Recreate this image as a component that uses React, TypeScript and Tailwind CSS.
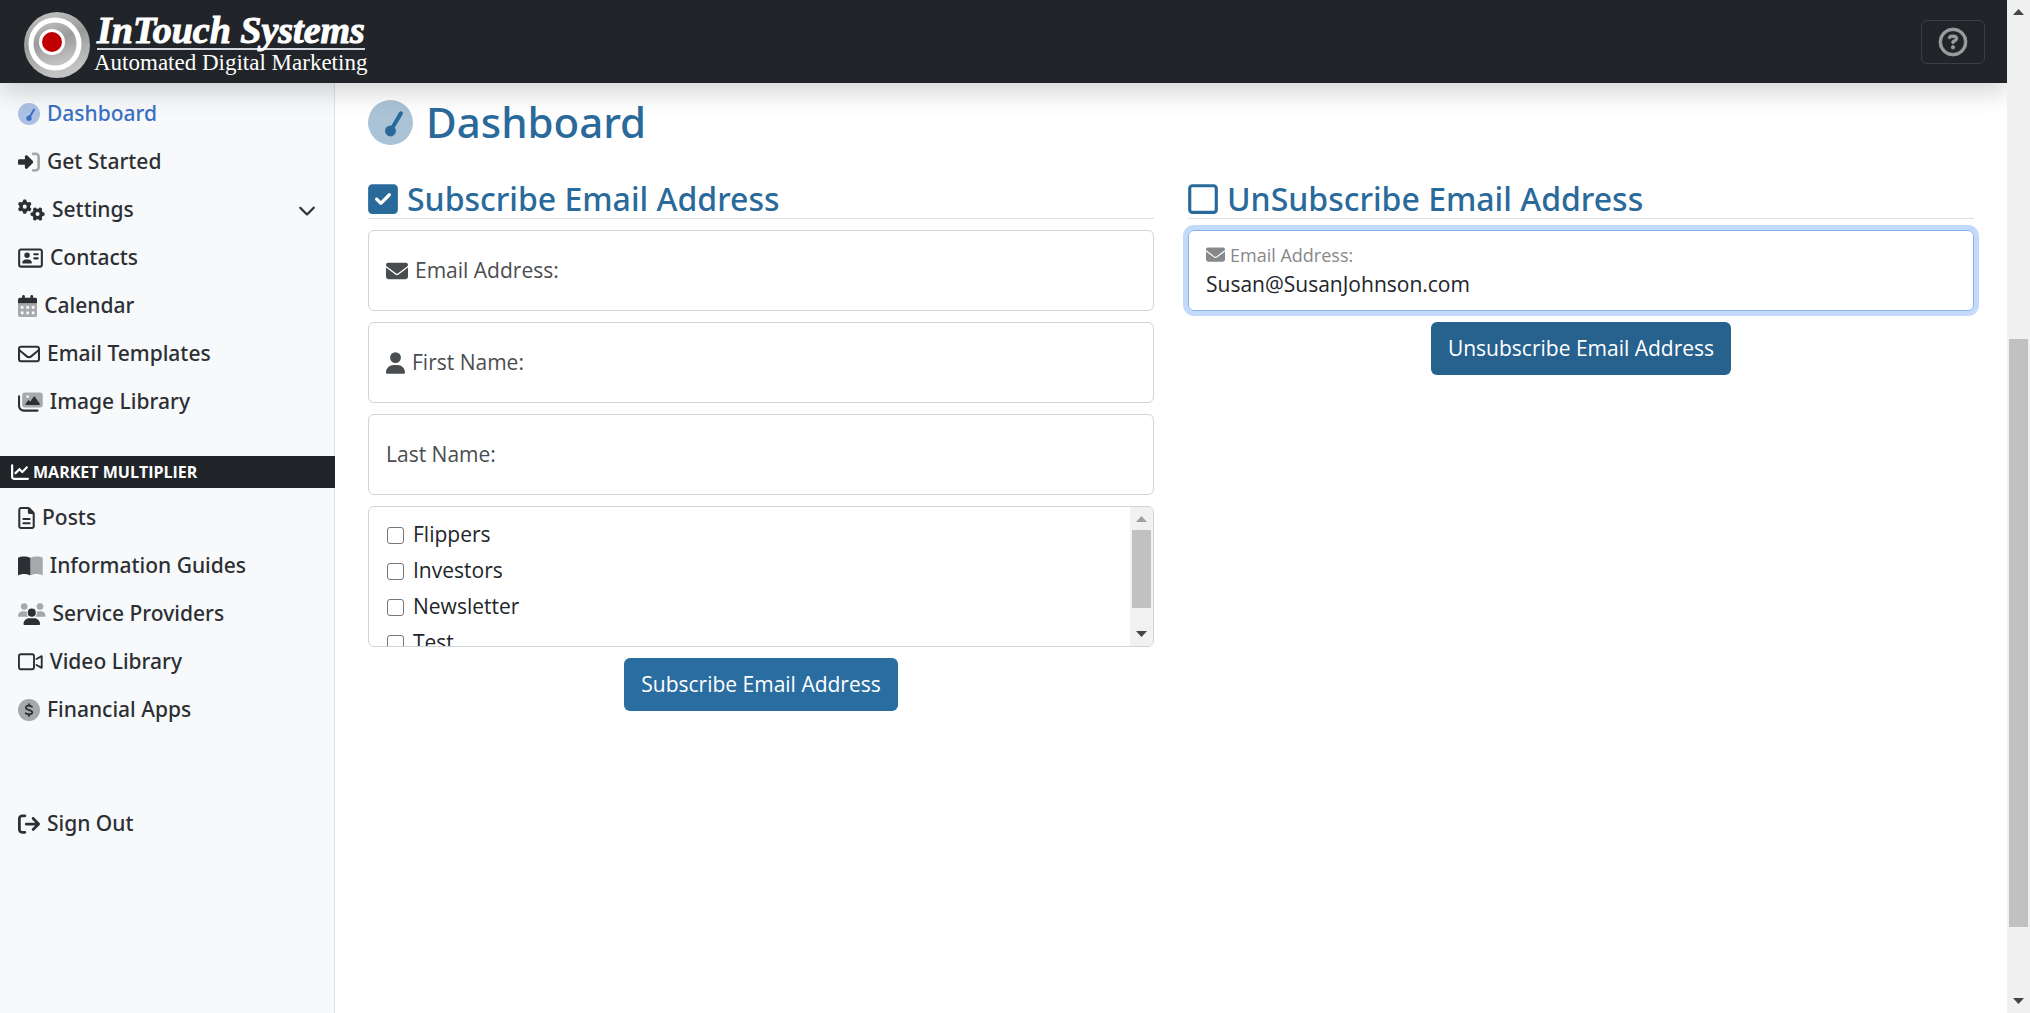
import { useState } from "react";
import type { ReactNode } from "react";
import {
  FaArrowRightFromBracket,
  FaChartLine,
  FaChevronDown,
  FaEnvelope,
  FaGears,
  FaRegAddressCard,
  FaRegCircleQuestion,
  FaRegEnvelope,
  FaRegFileLines,
  FaRegSquare,
  FaSquareCheck,
  FaUser,
} from "react-icons/fa6";

// Two-tone icons

function Duo({ w = 512, children }: { w?: number; children: ReactNode }) {
  return (
    <svg viewBox={`0 0 ${w} 512`} style={{ width: `${w / 512}em` }} className="h-[1em] shrink-0" fill="currentColor" aria-hidden="true">
      {children}
    </svg>
  );
}

function GaugeIcon() {
  return (
    <Duo>
      <circle cx="256" cy="256" r="256" opacity="0.4" />
      <circle cx="256" cy="352" r="62" />
      <path d="M256 352L374 152" stroke="currentColor" strokeWidth="46" strokeLinecap="round" />
    </Duo>
  );
}

function GetStartedIcon() {
  return (
    <Duo>
      <path d="M217.9 105.9L340.7 228.7c7.2 7.2 11.3 17.1 11.3 27.3s-4.1 20.1-11.3 27.3L217.9 406.1c-6.4 6.4-15 9.9-24 9.9c-18.7 0-33.9-15.2-33.9-33.9l0-62.1L32 320c-17.7 0-32-14.3-32-32l0-64c0-17.7 14.3-32 32-32l128 0 0-62.1c0-18.7 15.2-33.9 33.9-33.9c9 0 17.6 3.6 24 9.9z" />
      <path opacity="0.4" d="M352 416l64 0c17.7 0 32-14.3 32-32l0-256c0-17.7-14.3-32-32-32l-64 0c-17.7 0-32-14.3-32-32s14.3-32 32-32l64 0c53 0 96 43 96 96l0 256c0 53-43 96-96 96l-64 0c-17.7 0-32-14.3-32-32s14.3-32 32-32z" />
    </Duo>
  );
}

function CalendarIcon() {
  return (
    <Duo w={448}>
      <path
        opacity="0.4"
        fillRule="evenodd"
        d="M0 192H448V464a48 48 0 0 1-48 48H48a48 48 0 0 1-48-48ZM64 256v64h64v-64ZM192 256v64h64v-64ZM320 256v64h64v-64ZM64 384v64h64v-64ZM192 384v64h64v-64ZM320 384v64h64v-64Z"
      />
      <path d="M128 0a32 32 0 0 1 32 32v32h128V32a32 32 0 0 1 64 0v32h48a48 48 0 0 1 48 48v80H0v-80a48 48 0 0 1 48-48h48V32a32 32 0 0 1 32-32Z" />
    </Duo>
  );
}

function ImagesIcon() {
  return (
    <Duo w={576}>
      <path
        opacity="0.4"
        fillRule="evenodd"
        d="M160 32H512a64 64 0 0 1 64 64V320a64 64 0 0 1-64 64H160a64 64 0 0 1-64-64V96a64 64 0 0 1 64-64ZM224 160a32 32 0 1 0 0-64 32 32 0 0 0 0 64Z"
      />
      <path d="M362 138c8-12 26-12 34 0l112 160c8 12 0 26-14 26H188c-14 0-22-15-13-27l55-72c8-10 24-10 32 0l22 28Z" />
      <path d="M24 96a24 24 0 0 1 24 24V344c0 49 39 88 88 88H456a24 24 0 0 1 0 48H136C61 480 0 419 0 344V120a24 24 0 0 1 24-24Z" />
    </Duo>
  );
}

function BookIcon() {
  return (
    <Duo w={576}>
      <path d="M0 64C60 28 190 20 288 62V478C200 430 90 430 0 478Z" />
      <path opacity="0.4" d="M576 64C516 28 386 20 288 62V478C376 430 486 430 576 478Z" />
    </Duo>
  );
}

function PeopleIcon() {
  return (
    <Duo w={640}>
      <g opacity="0.4">
        <circle cx="144" cy="80" r="76" />
        <circle cx="512" cy="80" r="76" />
        <path d="M0 300c0-62 48-108 106-108h44c20 0 40 5 57 13-12 44 0 84 30 115H22c-12 0-22-9-22-20Z" />
        <path d="M640 300c0-62-48-108-106-108h-44c-20 0-40 5-57 13 12 44 0 84-30 115h215c12 0 22-9 22-20Z" />
      </g>
      <circle cx="320" cy="224" r="94" />
      <path d="M128 486c0-74 60-134 134-134h116c74 0 134 60 134 134 0 15-12 26-26 26H154c-14 0-26-11-26-26Z" />
    </Duo>
  );
}

function VideoIcon() {
  return (
    <Duo w={576}>
      <g fill="none" stroke="currentColor" strokeWidth="44" strokeLinejoin="round" strokeLinecap="round">
        <rect x="22" y="76" width="350" height="350" rx="46" />
        <path d="M430 186L552 120V392L430 326" />
      </g>
    </Duo>
  );
}

function DollarIcon() {
  return (
    <Duo>
      <circle cx="256" cy="256" r="256" opacity="0.4" />
      <g fill="none" stroke="currentColor" strokeWidth="40" strokeLinecap="round">
        <path d="M256 118V154M256 358V394" />
        <path d="M326 180c-22-14-48-24-74-24-40 0-68 18-68 48 0 72 148 36 148 106 0 32-32 48-70 48-34 0-62-14-84-28" />
      </g>
    </Duo>
  );
}

const mainLinks = [
  { label: "Dashboard", icon: <GaugeIcon />, active: true },
  { label: "Get Started", icon: <GetStartedIcon /> },
  { label: "Settings", icon: <FaGears className="w-[27px]" />, submenu: true },
  { label: "Contacts", icon: <FaRegAddressCard className="w-[25px]" /> },
  { label: "Calendar", icon: <CalendarIcon /> },
  { label: "Email Templates", icon: <FaRegEnvelope /> },
  { label: "Image Library", icon: <ImagesIcon /> },
];

const marketLinks = [
  { label: "Posts", icon: <FaRegFileLines className="w-[17px]" /> },
  { label: "Information Guides", icon: <BookIcon /> },
  { label: "Service Providers", icon: <PeopleIcon /> },
  { label: "Video Library", icon: <VideoIcon /> },
  { label: "Financial Apps", icon: <DollarIcon /> },
];

const lists = ["Flippers", "Investors", "Newsletter", "Test"];

type NavItem = { label: string; icon: ReactNode; active?: boolean; submenu?: boolean };

function NavLink({ label, icon, active, submenu }: NavItem) {
  return (
    <a
      href="#"
      className={`flex h-12 items-center gap-[7px] px-[18px] font-['Noto_Sans',sans-serif] font-medium ${active ? "text-[#3a6fc4]" : "text-[#2c2f33]"}`}
    >
      <span className="text-[22px]">{icon}</span>
      {label}
      {submenu && <FaChevronDown className="ml-auto text-lg" />}
    </a>
  );
}

function Logo() {
  return (
    <a href="#" className="flex items-center gap-1 pt-[7px] text-white">
      <svg viewBox="0 0 66 66" className="size-[66px]" aria-hidden="true">
        <defs>
          <linearGradient id="ring" x1="0" y1="0" x2="0.3" y2="1">
            <stop offset="0" stopColor="#c9c9c9" />
            <stop offset="0.5" stopColor="#9a9a9a" />
            <stop offset="1" stopColor="#c4c4c4" />
          </linearGradient>
        </defs>
        <circle cx="33" cy="33" r="33" fill="url(#ring)" />
        <circle cx="31" cy="32" r="24" fill="url(#ring)" stroke="#fff" strokeWidth="5" />
        <circle cx="28" cy="30" r="13" fill="#fff" />
        <circle cx="28" cy="30" r="10" fill="#c00000" />
      </svg>
      <span className="flex flex-col font-['Liberation_Serif',serif]">
        <span className="mx-[3px] border-b-2 border-gray-300 pb-[2px] text-[38px] leading-[32px] font-bold italic [-webkit-text-stroke:1px_white]">InTouch Systems</span>
        <span className="text-[23px] leading-[26px]">Automated Digital Marketing</span>
      </span>
    </a>
  );
}

function Arrow({ up = false, muted = false }: { up?: boolean; muted?: boolean }) {
  return (
    <svg viewBox="0 0 11 6" className={`h-[6px] w-[11px] ${muted ? "text-[#a0a0a0]" : "text-[#454545]"}`} fill="currentColor" aria-hidden="true">
      <path d={up ? "M0 6L5.5 0L11 6Z" : "M0 0L5.5 6L11 0Z"} />
    </svg>
  );
}

function Heading({ icon, children }: { icon: ReactNode; children: ReactNode }) {
  return (
    <h2 className="flex items-center gap-[9px] border-b border-[#dee2e6] font-['Noto_Sans',sans-serif] text-[32px] leading-[38px] font-medium text-[#2a6a9b]">
      {icon}
      {children}
    </h2>
  );
}

function Field({ id, label, icon }: { id: string; label: string; icon?: ReactNode }) {
  return (
    <div className="flex h-[81px] items-center gap-4 rounded-md border border-[#ced4da] px-[17px]">
      <label htmlFor={id} className="flex items-center gap-[7px] text-[#4a4d50]">
        {icon}
        {label}
      </label>
      <input id={id} type="text" className="min-w-0 flex-1 outline-none" />
    </div>
  );
}

export default function App() {
  const [email, setEmail] = useState("Susan@SusanJohnson.com");

  return (
    <div className="flex h-screen bg-white font-['Open_Sans',sans-serif] text-[21px] text-[#212529]">
      <div className="flex min-w-0 flex-1 flex-col overflow-hidden">
        <header className="z-10 flex h-[83px] shrink-0 items-center justify-between bg-[#212529] pr-[22px] pl-6 shadow-[0_11px_22px_rgba(0,0,0,0.15)]">
          <Logo />
          <button aria-label="Help" className="flex h-11 w-16 items-center justify-center rounded-md border border-[#3b3f44] text-[28px] text-[#9b9d9f]">
            <FaRegCircleQuestion stroke="currentColor" strokeWidth="14" className="overflow-visible" />
          </button>
        </header>

        <div className="flex min-h-0 flex-1">
          <nav className="w-[335px] shrink-0 border-r border-[#dee2e6] bg-[#f8f9fb] pt-[7px]">
            {mainLinks.map((link) => (
              <NavLink key={link.label} {...link} />
            ))}
            <h6 className="mt-[30px] -mr-px mb-[6px] flex h-8 items-center gap-1 bg-[#212529] px-[11px] text-base font-bold text-white">
              <FaChartLine className="text-lg" />
              MARKET MULTIPLIER
            </h6>
            {marketLinks.map((link) => (
              <NavLink key={link.label} {...link} />
            ))}
            <div className="pt-[66px]">
              <NavLink label="Sign Out" icon={<FaArrowRightFromBracket />} />
            </div>
          </nav>

          <main className="min-w-0 flex-1 px-[33px] pt-[11px]">
            <h1 className="flex items-center gap-[13px] font-['Noto_Sans',sans-serif] text-[42px] leading-[56px] font-medium text-[#2a6a9b]">
              <span className="text-[45px]">
                <GaugeIcon />
              </span>
              Dashboard
            </h1>

            <div className="mt-[30px] grid grid-cols-2 gap-[34px]">
              <section className="flex flex-col gap-[11px]">
                <Heading icon={<FaSquareCheck className="h-[34px] w-[30px]" />}>Subscribe Email Address</Heading>
                <Field id="sub-email" label="Email Address:" icon={<FaEnvelope className="text-[22px]" />} />
                <Field id="sub-first" label="First Name:" icon={<FaUser className="h-[22px] w-[19px]" />} />
                <Field id="sub-last" label="Last Name:" />

                <div className="flex h-[141px] overflow-hidden rounded-md border border-[#ced4da]">
                  <div className="flex-1 overflow-hidden px-[18px] pt-[10px]">
                    {lists.map((name) => (
                      <label key={name} className="flex h-9 items-center gap-[9px]">
                        <input type="checkbox" className="size-[17px] appearance-none rounded-[3px] border border-[#767676] bg-white checked:bg-[#2a6da0]" />
                        {name}
                      </label>
                    ))}
                  </div>
                  <div className="flex w-[23px] flex-col items-center bg-[#f1f1f1] py-[9px]">
                    <Arrow up muted />
                    <div className="mt-2 h-[78px] w-[19px] bg-[#c1c1c1]" />
                    <div className="flex-1" />
                    <Arrow />
                  </div>
                </div>

                <button className="h-[53px] self-center rounded-md bg-[#2a6da0] px-[17px] text-white">
                  Subscribe Email Address
                </button>
              </section>

              <section className="flex flex-col gap-[11px]">
                <Heading icon={<FaRegSquare className="h-[34px] w-[30px]" />}>UnSubscribe Email Address</Heading>
                <div className="flex h-[81px] flex-col justify-center rounded-md border border-[#86b0ee] px-[17px] ring-5 ring-[#c4dafb]">
                  <label htmlFor="unsub-email" className="flex items-center gap-[5px] text-[18px] leading-[26px] text-[#86888a]">
                    <FaEnvelope className="text-[19px]" />
                    Email Address:
                  </label>
                  <input
                    id="unsub-email"
                    type="text"
                    value={email}
                    onChange={(e) => setEmail(e.target.value)}
                    className="w-full leading-[32px] outline-none"
                  />
                </div>
                <button className="h-[53px] self-center rounded-md bg-[#27618d] px-[17px] text-white">
                  Unsubscribe Email Address
                </button>
              </section>
            </div>
          </main>
        </div>
      </div>

      {/* page scrollbar */}
      <div className="z-20 flex w-[23px] shrink-0 flex-col items-center bg-[#f0f0f0] py-[9px]">
        <Arrow up />
        <div className="flex-[324]" />
        <div className="w-[19px] flex-[588] bg-[#c1c1c1]" />
        <div className="flex-[71]" />
        <Arrow />
      </div>
    </div>
  );
}
